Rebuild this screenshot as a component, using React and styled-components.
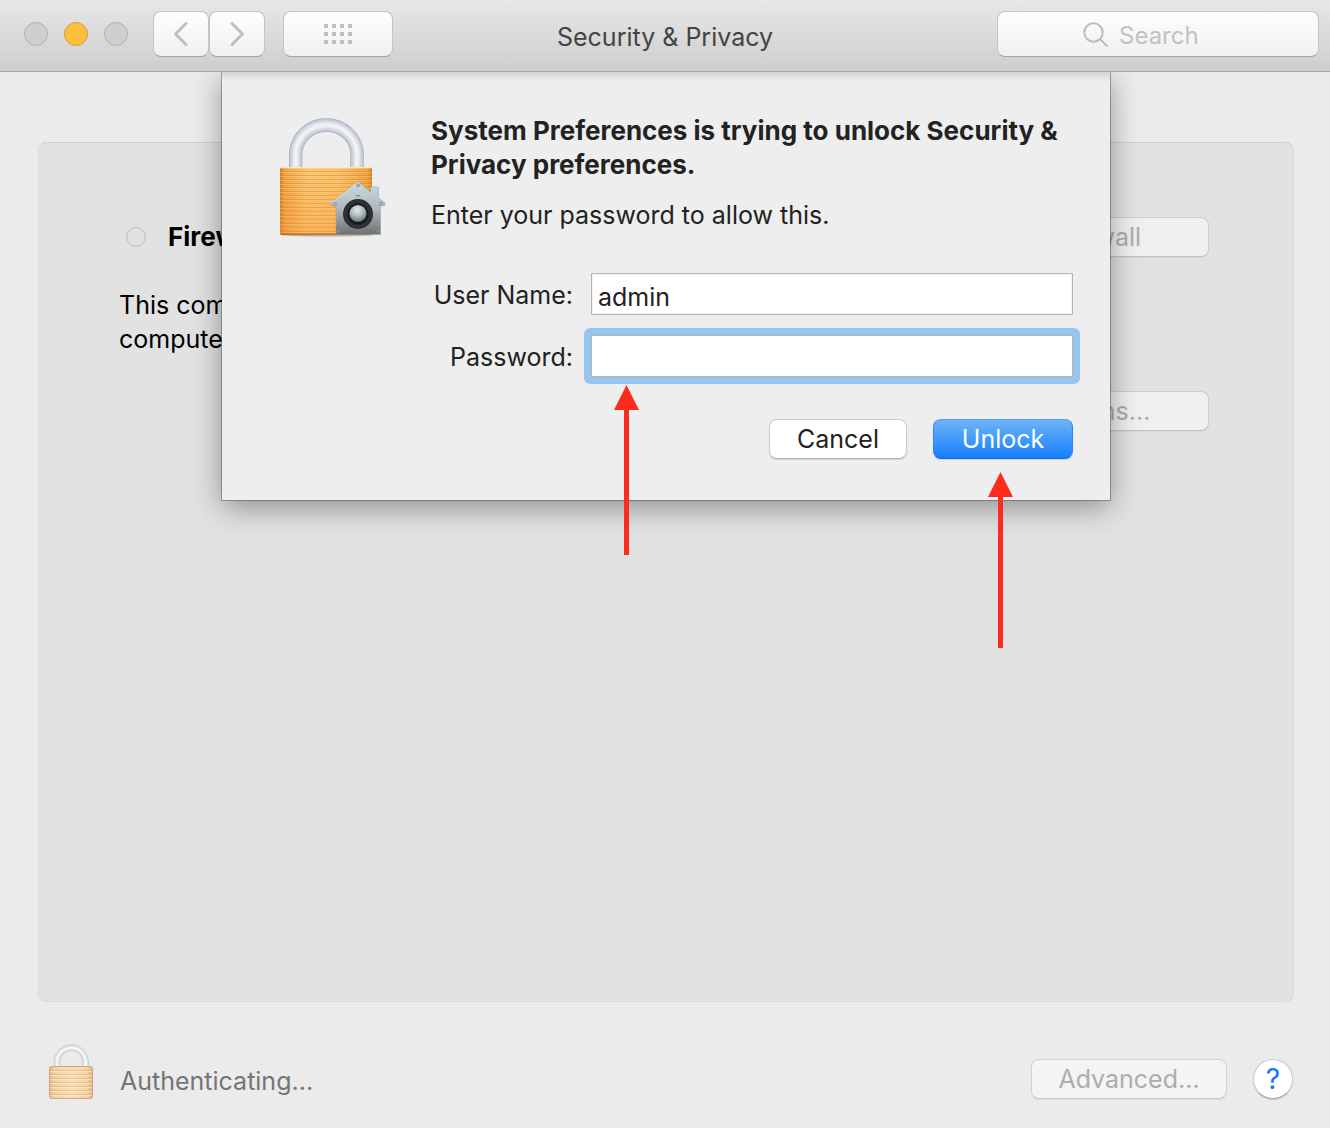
import React, { useState } from "react";
import styled, { createGlobalStyle } from "styled-components";

const GlobalStyle = createGlobalStyle`
  * {
    box-sizing: border-box;
  }
  body {
    margin: 0;
    background: #ebebeb;
  }
  body, button, input {
    font-family: Inter, "Liberation Sans", sans-serif;
    font-size: 25px;
  }
  svg {
    flex-shrink: 0;
  }
`;

const Window = styled.div`
  display: flex;
  flex-direction: column;
  min-height: 100vh;
  background: #ebebeb;
  color: #000;
`;

const Toolbar = styled.header`
  display: grid;
  grid-template-columns: 1fr auto 1fr;
  align-items: center;
  height: 72px;
  padding: 0 11px 4px;
  background: linear-gradient(to bottom, #e7e7e7, #cecece);
  border-bottom: 1px solid #a8a8a8;
`;

const ToolbarLeft = styled.div`
  display: flex;
  align-items: center;
  padding-left: 13px;
  gap: 18px;
`;

const Lights = styled.div`
  display: flex;
  gap: 16px;
  margin-right: 7px;
`;

const Light = styled.button`
  width: 24px;
  height: 24px;
  padding: 0;
  border-radius: 50%;
  border: 1px solid ${(props) => (props.$active ? "#de9a34" : "#b0b0b0")};
  background: ${(props) => (props.$active ? "#fdbd3e" : "#cfcfcf")};
`;

const NavGroup = styled.div`
  display: flex;
`;

const ToolButton = styled.button`
  display: flex;
  align-items: center;
  justify-content: center;
  width: ${(props) => (props.$wide ? "110px" : "56px")};
  height: 46px;
  padding: 0;
  border: 1px solid #c4c4c4;
  border-bottom-color: #a4a4a4;
  border-radius: 8px;
  background: linear-gradient(to bottom, #fefefe, #f0f0f0);
`;

const Title = styled.h1`
  margin: 0;
  padding-top: 6px;
  font-size: 25px;
  font-weight: 400;
  line-height: 34px;
  color: #444;
`;

const SearchBox = styled.label`
  display: flex;
  align-items: center;
  justify-content: center;
  justify-self: end;
  gap: 10px;
  width: 322px;
  height: 46px;
  border: 1px solid #c4c4c4;
  border-bottom-color: #a4a4a4;
  border-radius: 8px;
  background: linear-gradient(to bottom, #fefefe, #f0f0f0);
`;

const SearchInput = styled.input`
  width: 114px;
  padding: 4px 0 0;
  border: none;
  outline: none;
  background: none;
  font-size: 24px;

  &::placeholder {
    color: #c2c2c2;
    opacity: 1;
  }
`;

const Content = styled.main`
  position: relative;
  display: flex;
  flex-direction: column;
  flex: 1;
  padding: 70px 36px 0 38px;
`;

const Panel = styled.section`
  flex: 1;
  display: flex;
  justify-content: space-between;
  align-items: flex-start;
  padding: 74px 84px 0 80px;
  border: 1px solid #dbdbdb;
  border-top-color: #d0d0d0;
  border-radius: 8px;
  background: #e2e2e2;
`;

const Status = styled.h2`
  display: flex;
  align-items: center;
  gap: 22px;
  margin: 0 0 31px;
  padding-left: 7px;
  font-size: 26px;
  font-weight: 700;
  line-height: 40px;
`;

const Dot = styled.span`
  width: 20px;
  height: 20px;
  border: 1px solid #bdbdbd;
  border-radius: 50%;
`;

const Text = styled.p`
  margin: 0;
  line-height: 34px;
`;

const PanelActions = styled.div`
  display: flex;
  flex-direction: column;
  align-items: flex-end;
  flex-shrink: 0;
  gap: 134px;
`;

const PushButton = styled.button`
  height: 40px;
  width: ${(props) => props.$width};
  padding: 0;
  line-height: 34px;
  color: #222;
  background: #fff;
  border: 1px solid #cacaca;
  border-bottom-color: #b4b4b4;
  border-radius: 8px;
  box-shadow: 0 1px 1px rgba(0, 0, 0, 0.12);

  &:disabled {
    color: #adadad;
    background: #f4f4f4;
    border-color: #d2d2d2;
    border-bottom-color: #c6c6c6;
    box-shadow: 0 1px 1px rgba(0, 0, 0, 0.05);
  }
`;

const PanelButton = styled(PushButton)`
  &:disabled {
    background: #f0f0f0;
    border-color: #cdcdcd;
    border-bottom-color: #c2c2c2;
  }
`;

const PrimaryButton = styled(PushButton)`
  color: #fff;
  background: linear-gradient(to bottom, #6fb3f8, #3d98fa 55%, #157efb);
  border-color: #4f9ff3 #2f86f2 #0f68f5;
`;

const Footer = styled.footer`
  display: flex;
  align-items: flex-end;
  padding: 42px 37px 29px 48px;
`;

const FooterText = styled.span`
  flex: 1;
  margin-left: 26px;
  line-height: 36px;
  color: #757575;
`;

const HelpButton = styled.button`
  width: 40px;
  height: 40px;
  margin-left: 26px;
  padding: 0;
  color: #0f7bff;
  font-size: 28px;
  line-height: 34px;
  background: #fff;
  border: 1px solid #cacaca;
  border-bottom-color: #aaa;
  border-radius: 50%;
  box-shadow: 0 1px 1px rgba(0, 0, 0, 0.15);
`;

const SheetLayer = styled.div`
  position: absolute;
  top: 0;
  left: 0;
  right: 0;
  display: flex;
  justify-content: center;
  padding: 0 36px 0 38px;
  /* keeps the sheet's shadow from falling on the toolbar */
  clip-path: inset(0 0 -200px 0);
`;

const Sheet = styled.form`
  display: flex;
  gap: 43px;
  width: 888px;
  padding: 42px 37px 41px 56px;
  color: #222;
  background: linear-gradient(to bottom, #d4d4d4, #e6e6e6 6px, #eee 10px);
  box-shadow: 0 0 0 1px rgba(0, 0, 0, 0.28), 0 7px 28px rgba(0, 0, 0, 0.38);
`;

const SheetBody = styled.div`
  flex: 1;
`;

const SheetTitle = styled.h2`
  margin: 0 0 16px;
  font-size: 26px;
  font-weight: 700;
  line-height: 34px;
`;

const Fields = styled.div`
  display: grid;
  grid-template-columns: 142px 1fr;
  align-items: center;
  gap: 20px 18px;
  margin: 41px 0 42px;
`;

const Label = styled.label`
  justify-self: end;
  padding-top: 2px;
  white-space: nowrap;
  line-height: 34px;
`;

const Anchor = styled.div`
  position: relative;
`;

const Input = styled.input`
  display: block;
  width: 100%;
  height: 42px;
  padding: 6px 6px 0;
  color: #222;
  background: #fff;
  border: 1px solid #b4b4b4;
  border-radius: 0;
  outline: none;
  box-shadow: ${(props) =>
    props.$ring ? "0 0 0 7px #97c3f0" : "inset 0 0 0 1px #f2f2f2"};
  clip-path: ${(props) => (props.$ring ? "inset(-7px round 6px)" : "none")};
`;

const Buttons = styled.div`
  display: flex;
  justify-content: flex-end;
  gap: 26px;
`;

const ArrowSvg = styled.svg`
  position: absolute;
  top: calc(100% + ${(props) => props.$gap});
  left: ${(props) => props.$left};
  pointer-events: none;
`;

function Arrow({ length, gap, left }) {
  return (
    <ArrowSvg
      $gap={gap}
      $left={left}
      width="26"
      height={length}
      viewBox={`0 0 26 ${length}`}
      fill="#fc2b1c"
      aria-hidden="true"
    >
      <path d={`M12.5 0 L25 25 H15 V${length} H10 V25 H0 Z`} />
    </ArrowSvg>
  );
}

function ChevronIcon({ d }) {
  return (
    <svg
      width="20"
      height="28"
      viewBox="0 0 20 28"
      fill="none"
      stroke="#bfbfbf"
      strokeWidth="3"
      strokeLinecap="round"
      strokeLinejoin="round"
    >
      <path d={d} />
    </svg>
  );
}

function GridIcon() {
  return (
    <svg width="28" height="20" viewBox="0 0 28 20" fill="#bfbfbf">
      {[0, 8, 16].map((y) =>
        [0, 8, 16, 24].map((x) => (
          <rect key={`${x}-${y}`} x={x} y={y} width="4" height="4" />
        ))
      )}
    </svg>
  );
}

function SearchIcon() {
  return (
    <svg
      width="26"
      height="26"
      viewBox="0 0 26 26"
      fill="none"
      stroke="#bcbcbc"
      strokeWidth="2"
    >
      <circle cx="10.5" cy="11.5" r="9.2" />
      <path d="M17 18 L24.5 25.5" />
    </svg>
  );
}

const shackle = "M30.7 62 V47 A30.8 30 0 0 1 92 47 V62";

function SecurityLock() {
  return (
    <svg width="110" height="126" viewBox="13 9 110 126" aria-hidden="true">
      <defs>
        <linearGradient id="brass" x1="0" x2="1" y1="0" y2="0">
          <stop offset="0" stopColor="#cf7f2b" />
          <stop offset="0.05" stopColor="#efa448" />
          <stop offset="0.3" stopColor="#fdc675" />
          <stop offset="0.65" stopColor="#fdc16b" />
          <stop offset="0.95" stopColor="#efa142" />
          <stop offset="1" stopColor="#cf7f2b" />
        </linearGradient>
        <linearGradient id="brassShade" x1="0" x2="0" y1="0" y2="1">
          <stop offset="0" stopColor="#f38d17" stopOpacity="0" />
          <stop offset="1" stopColor="#ee8c20" stopOpacity="0.3" />
        </linearGradient>
        <pattern id="ribs" width="4" height="4" patternUnits="userSpaceOnUse">
          <rect y="2" width="4" height="1" fill="#d67d1c" opacity="0.4" />
          <rect y="3" width="4" height="1" fill="#ffd792" opacity="0.35" />
        </pattern>
        <linearGradient id="house" x1="0" x2="0" y1="0" y2="1">
          <stop offset="0" stopColor="#cddae0" />
          <stop offset="0.5" stopColor="#aebabf" />
          <stop offset="1" stopColor="#6f7173" />
        </linearGradient>
        <radialGradient id="knob" cx="0.45" cy="0.3" r="0.75">
          <stop offset="0" stopColor="#e2eaee" />
          <stop offset="0.5" stopColor="#adb8be" />
          <stop offset="1" stopColor="#59636a" />
        </radialGradient>
      </defs>
      <ellipse cx="62" cy="130" rx="46" ry="1.5" fill="#000" opacity="0.25" />
      <g fill="none">
        <path d={shackle} stroke="#a5adb8" strokeWidth="13.4" />
        <path d={shackle} stroke="#c3cad3" strokeWidth="12" />
        <path d={shackle} stroke="#d5dae1" strokeWidth="9" />
        <path d={shackle} stroke="#e6eaee" strokeWidth="5.5" />
        <path d={shackle} stroke="#f1f3f5" strokeWidth="2.5" />
      </g>
      <rect x="15" y="62" width="92" height="68" rx="2" fill="url(#brass)" />
      <rect x="15" y="64" width="92" height="64" fill="url(#ribs)" />
      <rect x="15" y="62" width="92" height="68" rx="2" fill="url(#brassShade)" />
      <rect x="16" y="62" width="90" height="1.3" fill="#ffe9b5" />
      <rect x="15.5" y="128.5" width="91" height="1.3" fill="#b9651a" />
      <path
        d="M93 76.5 L105.5 87 V82 H113.5 V92.5 L120 98 V100.5 H115.5 V129.5 H71 V100.5 H65.5 V98 Z"
        fill="url(#house)"
        stroke="#95a1a6"
        strokeWidth="0.5"
      />
      <path d="M93 77.5 L66.5 98" stroke="#e1e9ec" strokeWidth="0.9" />
      <g fill="#b4bfc4" stroke="#76828a" strokeWidth="0.7">
        <circle cx="93" cy="80.3" r="1.5" />
        <circle cx="69.8" cy="99" r="1.6" />
        <circle cx="116" cy="99" r="1.6" />
        <circle cx="73.3" cy="126.8" r="1" />
        <circle cx="112.8" cy="126.8" r="1" />
      </g>
      <rect x="91" y="90" width="4" height="1.5" fill="#859096" />
      <circle cx="93" cy="109" r="15" fill="#2b2e30" />
      <circle cx="93" cy="109" r="12.8" fill="none" stroke="#3f4447" strokeDasharray="1 1" />
      <circle cx="93" cy="109" r="10.4" fill="#141617" />
      <circle cx="93" cy="108.5" r="8.6" fill="url(#knob)" />
    </svg>
  );
}

const smallShackle = "M9 23 V18 A14.3 14.3 0 0 1 37.6 18 V23";

function SmallLock() {
  return (
    <svg width="46" height="55" viewBox="0 0 46 55" aria-hidden="true">
      <defs>
        <linearGradient id="paleBrass" x1="0" x2="1" y1="0" y2="0">
          <stop offset="0" stopColor="#e2b88a" />
          <stop offset="0.12" stopColor="#f3d3a5" />
          <stop offset="0.5" stopColor="#f8dfb8" />
          <stop offset="0.88" stopColor="#f3d3a5" />
          <stop offset="1" stopColor="#ddb084" />
        </linearGradient>
      </defs>
      <g fill="none">
        <path d={smallShackle} stroke="#c2c8cb" strokeWidth="6.4" />
        <path d={smallShackle} stroke="#dde1e4" strokeWidth="5" />
        <path d={smallShackle} stroke="#f4f7f8" strokeWidth="2.6" />
      </g>
      <rect x="1.5" y="22.5" width="43" height="32" rx="2" fill="url(#paleBrass)" stroke="#cfa682" />
      {[26, 30, 34, 38, 42, 46, 50].map((y) => (
        <g key={y}>
          <rect x="2" y={y} width="42" height="1" fill="#d9a968" opacity="0.5" />
          <rect x="2" y={y + 1} width="42" height="1" fill="#ffeed0" opacity="0.6" />
        </g>
      ))}
    </svg>
  );
}

function UnlockSheet() {
  const [user, setUser] = useState("admin");
  const [password, setPassword] = useState("");

  return (
    <SheetLayer>
      <Sheet onSubmit={(e) => e.preventDefault()}>
        <SecurityLock />
        <SheetBody>
          <SheetTitle>
            System Preferences is trying to unlock Security &amp; Privacy
            preferences.
          </SheetTitle>
          <Text>Enter your password to allow this.</Text>
          <Fields>
            <Label htmlFor="user">User Name:</Label>
            <Input
              id="user"
              value={user}
              onChange={(e) => setUser(e.target.value)}
            />
            <Label htmlFor="password">Password:</Label>
            <Anchor>
              <Input
                $ring
                id="password"
                type="password"
                value={password}
                onChange={(e) => setPassword(e.target.value)}
              />
              <Arrow length={170} gap="8px" left="23px" />
            </Anchor>
          </Fields>
          <Buttons>
            <PushButton type="button" $width="138px">
              Cancel
            </PushButton>
            <Anchor>
              <PrimaryButton type="submit" $width="140px">
                Unlock
              </PrimaryButton>
              <Arrow length={176} gap="13px" left="55px" />
            </Anchor>
          </Buttons>
        </SheetBody>
      </Sheet>
    </SheetLayer>
  );
}

function App() {
  return (
    <Window>
      <GlobalStyle />
      <Toolbar>
        <ToolbarLeft>
          <Lights>
            <Light aria-label="Close" />
            <Light aria-label="Minimize" $active />
            <Light aria-label="Zoom" />
          </Lights>
          <NavGroup>
            <ToolButton aria-label="Back">
              <ChevronIcon d="M15 3.5 L4.5 14 L15 24.5" />
            </ToolButton>
            <ToolButton aria-label="Forward">
              <ChevronIcon d="M5 3.5 L15.5 14 L5 24.5" />
            </ToolButton>
          </NavGroup>
          <ToolButton $wide aria-label="Show All">
            <GridIcon />
          </ToolButton>
        </ToolbarLeft>
        <Title>Security &amp; Privacy</Title>
        <SearchBox>
          <SearchIcon />
          <SearchInput type="text" placeholder="Search" aria-label="Search" />
        </SearchBox>
      </Toolbar>

      <Content>
        <Panel>
          <div>
            <Status>
              <Dot />
              Firewall: Off
            </Status>
            <Text>
              This computer allows
              <br />
              computer connections.
            </Text>
          </div>
          <PanelActions>
            <PanelButton disabled $width="328px">
              Turn On Firewall
            </PanelButton>
            <PanelButton disabled $width="328px">
              Firewall Options...
            </PanelButton>
          </PanelActions>
        </Panel>
        <UnlockSheet />
      </Content>

      <Footer>
        <SmallLock />
        <FooterText>Authenticating...</FooterText>
        <PushButton disabled $width="196px">
          Advanced...
        </PushButton>
        <HelpButton aria-label="Help">?</HelpButton>
      </Footer>
    </Window>
  );
}

export default App;
